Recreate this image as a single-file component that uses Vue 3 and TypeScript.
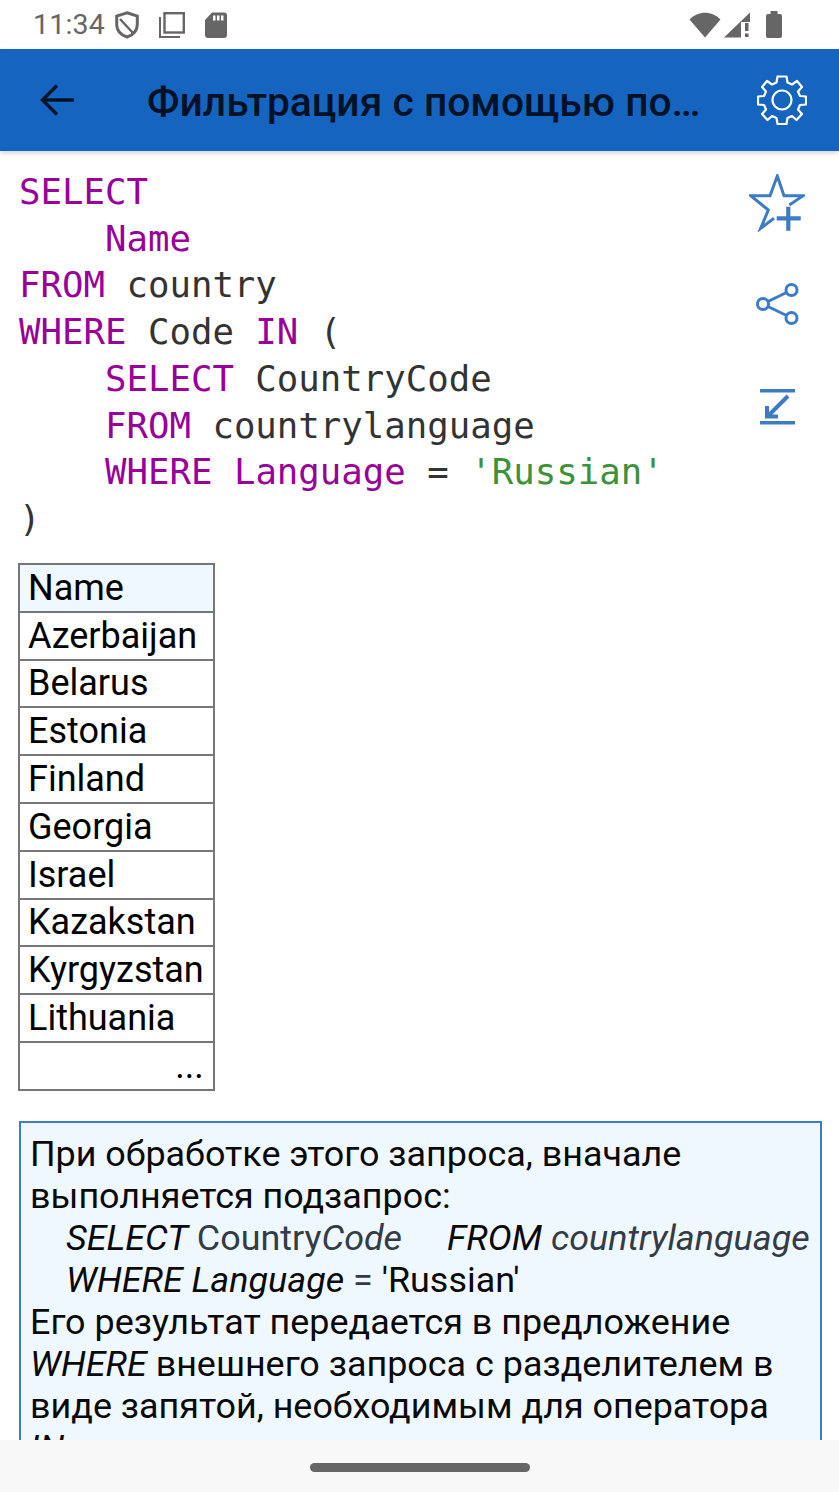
<script setup lang="ts">
const rows: string[] = ['Azerbaijan', 'Belarus', 'Estonia', 'Finland', 'Georgia', 'Israel', 'Kazakstan', 'Kyrgyzstan', 'Lithuania']
</script>

<template>
  <div class="screen">
    <div class="status">
      <span class="time">11:34</span>
      <svg class="shield" width="24" height="28" viewBox="0 0 24 28" fill="none" stroke="#666" stroke-width="3"><path d="M12 1.800 L22.300 5 V13.500 C22.300 19.500 18 24 12 26 C6 24 1.700 19.500 1.700 13.500 V5 Z"/><path d="M5 8 L18 22" stroke-width="2.500"/></svg>
      <svg class="copy" width="26" height="26" viewBox="0 0 26 26" fill="none" stroke="#666"><rect x="5.500" y="1.200" width="19.300" height="19.300" stroke-width="2.400"/><path d="M1 5 V25 H21" stroke-width="2"/></svg>
      <svg class="sd" width="22" height="26" viewBox="0 0 22 26"><path d="M7 0.500 H19 a3 3 0 0 1 3 3 V23 a3 3 0 0 1 -3 3 H3 a3 3 0 0 1 -3 -3 V8 Z" fill="#666"/><path d="M8 3.500h2.500v5H8zM12 3.500h2.500v5H12zM16 3.500h2.500v5H16z" fill="#fff"/></svg>
      <span class="grow"></span>
      <svg width="32" height="26" viewBox="0 0 32 26"><path d="M0.500 7.500 C9 -1.500 23 -1.500 31.500 7.500 L16 25.500 Z" fill="#666"/></svg>
      <svg class="signal" width="27" height="26" viewBox="0 0 27 26"><path d="M0 25.500 L26 0.500 V10 H17 V25.500 Z" fill="#666"/><path d="M21 11 h3.500 v8 h-3.500z M21 21.500 h3.500 v3.500 h-3.500z" fill="#666"/></svg>
      <svg class="battery" width="16" height="27" viewBox="0 0 16 27"><path d="M4.500 0 H11.500 V3 H14 a2 2 0 0 1 2 2 V25 a2 2 0 0 1 -2 2 H2 a2 2 0 0 1 -2 -2 V5 a2 2 0 0 1 2 -2 H4.500 Z" fill="#666"/></svg>
    </div>

    <header class="bar">
      <svg class="back" width="34" height="32" viewBox="0 0 34 32" fill="none" stroke="#021226" stroke-width="3.400"><path d="M34 16 H3"/><path d="M17 1.500 L2.500 16 L17 30.500"/></svg>
      <h1 class="title">Фильтрация с помощью по…</h1>
      <svg class="gear" width="50" height="50" viewBox="0 0 50 50" fill="none" stroke="#fff" stroke-width="2.200" stroke-linejoin="round"><circle cx="25" cy="25" r="9.500"/><path d="M20.500 1.500 H29.500 L30.500 7.500 L35 9.500 L40 6 L45 12 L41 16.500 L43 21 L49 21.500 V29.500 L43 30 L41 34.500 L45 39 L39.500 45 L35 41 L30.500 43 L29.500 49 H20.500 L19.500 43 L15 41 L10.500 45 L5 39 L9 34.500 L7 30 L1 29.500 V21.500 L7 21 L9 16.500 L5 12 L10 6 L15 9.500 L19.500 7.500 Z"/></svg>
    </header>

    <main class="content">
      <div class="code-wrap">
        <pre class="code"><span class="k">SELECT</span>
    <span class="k">Name</span>
<span class="k">FROM</span> country
<span class="k">WHERE</span> Code <span class="k">IN</span> (
    <span class="k">SELECT</span> CountryCode
    <span class="k">FROM</span> countrylanguage
    <span class="k">WHERE</span> <span class="k">Language</span> = <span class="s">'Russian'</span>
)</pre>
        <div class="tools">
          <svg width="56" height="58" viewBox="0 0 56 58" fill="none" stroke="#3b7cc4" stroke-width="3"><path d="M25 44.300 L11.700 54.300 L19.300 36 L1.700 21.700 H21 L28.300 2 L35 21.700 H54.300 L40.300 31"/><path d="M27.700 44.300 H51.700 M39.300 32.700 V56.700" stroke-width="4.200"/></svg>
          <svg class="share" width="44" height="44" viewBox="0 0 44 44" fill="none" stroke="#3b7cc4" stroke-width="3"><circle cx="36.500" cy="8" r="5.500"/><circle cx="8" cy="22" r="5.500"/><circle cx="36.500" cy="36" r="5.500"/><path d="M13 19.500 L31.500 10.500 M13 24.500 L31.500 33.500"/></svg>
          <svg class="arrow" width="36" height="38" viewBox="0 0 36 38" fill="none" stroke="#3b7cc4"><path d="M1 2.700 H36 M1 34.700 H36" stroke-width="3.400"/><path d="M29 8 L9 28 M8 18 V28.500 H19" stroke-width="4"/></svg>
        </div>
      </div>

      <table class="result">
        <tbody>
          <tr><td class="head">Name</td></tr>
          <tr v-for="r in rows" :key="r"><td>{{ r }}</td></tr>
          <tr><td class="more">...</td></tr>
        </tbody>
      </table>

      <div class="note">
        <div>При обработке этого запроса, вначале</div>
        <div>выполняется подзапрос:</div>
        <div class="ind"><i>SELECT</i> <span class="dim">Country<i>Code</i></span> <span class="gap"></span><i>FROM</i> <i class="dim">countrylanguage</i></div>
        <div class="ind"><i>WHERE Language</i> <span class="dim">=</span> 'Russian'</div>
        <div>Его результат передается в предложение</div>
        <div><i>WHERE</i> внешнего запроса с разделителем в</div>
        <div>виде запятой, необходимым для оператора</div>
        <div><i>IN</i>.</div>
      </div>
    </main>

    <footer class="nav"><span class="pill"></span></footer>
  </div>
</template>

<style>
html, body { margin: 0; background: #fff; }
</style>

<style scoped>
.screen {
  width: 839px;
  height: 1492px;
  display: flex;
  flex-direction: column;
  overflow: hidden;
  position: relative;
  background: #fff;
  font-family: Roboto, sans-serif;
}
.status {
  height: 49px;
  flex: none;
  display: flex;
  align-items: center;
  box-sizing: border-box;
  padding: 0 57px 0 33px;
  background: #fff;
}
.time { font-size: 28.500px; color: #666; letter-spacing: 0.200px; }
.shield { margin-left: 10px; }
.copy { margin-left: 20px; }
.sd { margin-left: 20px; }
.signal { margin-left: 3px; }
.battery { margin-left: 15px; }
.grow { flex: 1; }
.bar {
  height: 102px;
  flex: none;
  display: flex;
  align-items: center;
  box-sizing: border-box;
  padding: 0 32px 0 40px;
  background: #1565c0;
  box-shadow: 0 2px 5px rgba(0,0,0,.18);
  position: relative;
}
.title {
  margin: 3px 0 0 73px;
  flex: 1;
  font-size: 40.800px;
  font-weight: 500;
  color: #021226;
  white-space: nowrap;
}
.content { flex: 1; min-height: 0; overflow: hidden; padding: 18px 17px 0 19px; }
.code-wrap { display: flex; justify-content: space-between; height: 394px; }
.code {
  margin: 0;
  font-family: "DejaVu Sans Mono", monospace;
  font-size: 35.700px;
  line-height: 46.700px;
  color: #333;
}
.k { color: #990099; }
.s { color: #3a923a; }
.tools {
  display: flex;
  flex-direction: column;
  align-items: center;
  width: 56px;
  margin: 5px 17px 0 0;
}
.share { margin-top: 50px; }
.arrow { margin-top: 62px; }
.result {
  border-collapse: collapse;
  width: 195px;
  margin-left: -1px;
  font-size: 36px;
  color: #000;
}
.result td {
  border: 2px solid #777;
  height: 47.800px;
  padding: 0 9px 0 8px;
  line-height: 44px;
  box-sizing: border-box;
}
.result .head { background: #f0f8ff; }
.result .more { text-align: right; }
.note {
  margin-top: 30px;
  border: 2px solid #3b7cc4;
  border-bottom: 0;
  background: #f0f8ff;
  padding: 10px 10px 0 9px;
  font-size: 35.900px;
  line-height: 42px;
  color: #0a0a0a;
  white-space: nowrap;
}
.ind { padding-left: 36px; }
.dim { color: #333c45; }
.gap { display: inline-block; width: 36px; }
.nav {
  position: absolute;
  left: 0;
  right: 0;
  bottom: 0;
  height: 52px;
  background: #f8f8f8;
  display: flex;
  justify-content: center;
  padding-top: 23px;
  box-sizing: border-box;
}
.pill { width: 220px; height: 9px; border-radius: 5px; background: #666; }
</style>
